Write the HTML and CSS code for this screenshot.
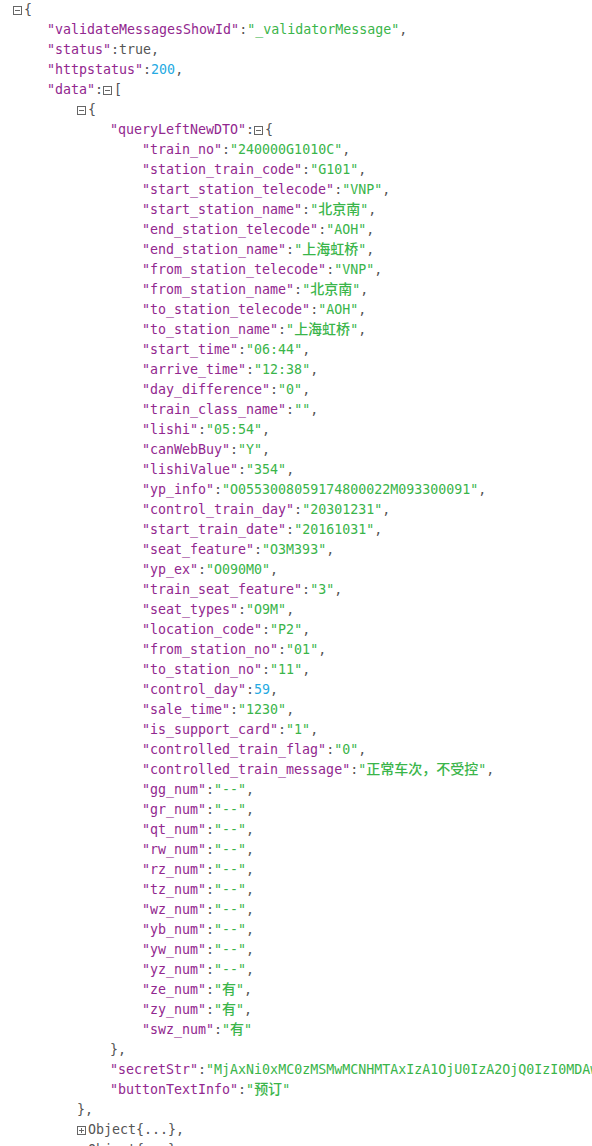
FILE: index.html
```html
<!DOCTYPE html>
<html>
<head>
<meta charset="utf-8">
<link rel="stylesheet" href="styles.css">
</head>
<body>
<div class="json">
  <div class="ln"><span class="tg"><svg width="9" height="9" viewBox="0 0 9 9"><rect x="0.5" y="0.5" width="8" height="8" fill="none" stroke="#666"/><path d="M2 4.5h5" stroke="#666"/></svg></span><span class="p">{</span></div>
  <div class="blk b1">
    <div class="ln"><span class="k">"validateMessagesShowId"</span><span class="p">:</span><span class="s">"_validatorMessage"</span><span class="p">,</span></div>
    <div class="ln"><span class="k">"status"</span><span class="p">:</span><span class="b">true</span><span class="p">,</span></div>
    <div class="ln"><span class="k">"httpstatus"</span><span class="p">:</span><span class="n">200</span><span class="p">,</span></div>
    <div class="ln"><span class="k">"data"</span><span class="p">:</span><span class="tg"><svg width="9" height="9" viewBox="0 0 9 9"><rect x="0.5" y="0.5" width="8" height="8" fill="none" stroke="#666"/><path d="M2 4.5h5" stroke="#666"/></svg></span><span class="p">[</span></div>
    <div class="blk b2">
      <div class="ln"><span class="tg"><svg width="9" height="9" viewBox="0 0 9 9"><rect x="0.5" y="0.5" width="8" height="8" fill="none" stroke="#666"/><path d="M2 4.5h5" stroke="#666"/></svg></span><span class="p">{</span></div>
      <div class="blk b3">
        <div class="ln"><span class="k">"queryLeftNewDTO"</span><span class="p">:</span><span class="tg"><svg width="9" height="9" viewBox="0 0 9 9"><rect x="0.5" y="0.5" width="8" height="8" fill="none" stroke="#666"/><path d="M2 4.5h5" stroke="#666"/></svg></span><span class="p">{</span></div>
        <div class="blk b4">
          <div class="ln"><span class="k">"train_no"</span><span class="p">:</span><span class="s">"240000G1010C"</span><span class="p">,</span></div>
          <div class="ln"><span class="k">"station_train_code"</span><span class="p">:</span><span class="s">"G101"</span><span class="p">,</span></div>
          <div class="ln"><span class="k">"start_station_telecode"</span><span class="p">:</span><span class="s">"VNP"</span><span class="p">,</span></div>
          <div class="ln"><span class="k">"start_station_name"</span><span class="p">:</span><span class="s">"<span class="cjk">北京南</span>"</span><span class="p">,</span></div>
          <div class="ln"><span class="k">"end_station_telecode"</span><span class="p">:</span><span class="s">"AOH"</span><span class="p">,</span></div>
          <div class="ln"><span class="k">"end_station_name"</span><span class="p">:</span><span class="s">"<span class="cjk">上海虹桥</span>"</span><span class="p">,</span></div>
          <div class="ln"><span class="k">"from_station_telecode"</span><span class="p">:</span><span class="s">"VNP"</span><span class="p">,</span></div>
          <div class="ln"><span class="k">"from_station_name"</span><span class="p">:</span><span class="s">"<span class="cjk">北京南</span>"</span><span class="p">,</span></div>
          <div class="ln"><span class="k">"to_station_telecode"</span><span class="p">:</span><span class="s">"AOH"</span><span class="p">,</span></div>
          <div class="ln"><span class="k">"to_station_name"</span><span class="p">:</span><span class="s">"<span class="cjk">上海虹桥</span>"</span><span class="p">,</span></div>
          <div class="ln"><span class="k">"start_time"</span><span class="p">:</span><span class="s">"06:44"</span><span class="p">,</span></div>
          <div class="ln"><span class="k">"arrive_time"</span><span class="p">:</span><span class="s">"12:38"</span><span class="p">,</span></div>
          <div class="ln"><span class="k">"day_difference"</span><span class="p">:</span><span class="s">"0"</span><span class="p">,</span></div>
          <div class="ln"><span class="k">"train_class_name"</span><span class="p">:</span><span class="s">""</span><span class="p">,</span></div>
          <div class="ln"><span class="k">"lishi"</span><span class="p">:</span><span class="s">"05:54"</span><span class="p">,</span></div>
          <div class="ln"><span class="k">"canWebBuy"</span><span class="p">:</span><span class="s">"Y"</span><span class="p">,</span></div>
          <div class="ln"><span class="k">"lishiValue"</span><span class="p">:</span><span class="s">"354"</span><span class="p">,</span></div>
          <div class="ln"><span class="k">"yp_info"</span><span class="p">:</span><span class="s">"O0553008059174800022M093300091"</span><span class="p">,</span></div>
          <div class="ln"><span class="k">"control_train_day"</span><span class="p">:</span><span class="s">"20301231"</span><span class="p">,</span></div>
          <div class="ln"><span class="k">"start_train_date"</span><span class="p">:</span><span class="s">"20161031"</span><span class="p">,</span></div>
          <div class="ln"><span class="k">"seat_feature"</span><span class="p">:</span><span class="s">"O3M393"</span><span class="p">,</span></div>
          <div class="ln"><span class="k">"yp_ex"</span><span class="p">:</span><span class="s">"O090M0"</span><span class="p">,</span></div>
          <div class="ln"><span class="k">"train_seat_feature"</span><span class="p">:</span><span class="s">"3"</span><span class="p">,</span></div>
          <div class="ln"><span class="k">"seat_types"</span><span class="p">:</span><span class="s">"O9M"</span><span class="p">,</span></div>
          <div class="ln"><span class="k">"location_code"</span><span class="p">:</span><span class="s">"P2"</span><span class="p">,</span></div>
          <div class="ln"><span class="k">"from_station_no"</span><span class="p">:</span><span class="s">"01"</span><span class="p">,</span></div>
          <div class="ln"><span class="k">"to_station_no"</span><span class="p">:</span><span class="s">"11"</span><span class="p">,</span></div>
          <div class="ln"><span class="k">"control_day"</span><span class="p">:</span><span class="n">59</span><span class="p">,</span></div>
          <div class="ln"><span class="k">"sale_time"</span><span class="p">:</span><span class="s">"1230"</span><span class="p">,</span></div>
          <div class="ln"><span class="k">"is_support_card"</span><span class="p">:</span><span class="s">"1"</span><span class="p">,</span></div>
          <div class="ln"><span class="k">"controlled_train_flag"</span><span class="p">:</span><span class="s">"0"</span><span class="p">,</span></div>
          <div class="ln"><span class="k">"controlled_train_message"</span><span class="p">:</span><span class="s">"<span class="cjk">正常车次，不受控</span>"</span><span class="p">,</span></div>
          <div class="ln"><span class="k">"gg_num"</span><span class="p">:</span><span class="s">"--"</span><span class="p">,</span></div>
          <div class="ln"><span class="k">"gr_num"</span><span class="p">:</span><span class="s">"--"</span><span class="p">,</span></div>
          <div class="ln"><span class="k">"qt_num"</span><span class="p">:</span><span class="s">"--"</span><span class="p">,</span></div>
          <div class="ln"><span class="k">"rw_num"</span><span class="p">:</span><span class="s">"--"</span><span class="p">,</span></div>
          <div class="ln"><span class="k">"rz_num"</span><span class="p">:</span><span class="s">"--"</span><span class="p">,</span></div>
          <div class="ln"><span class="k">"tz_num"</span><span class="p">:</span><span class="s">"--"</span><span class="p">,</span></div>
          <div class="ln"><span class="k">"wz_num"</span><span class="p">:</span><span class="s">"--"</span><span class="p">,</span></div>
          <div class="ln"><span class="k">"yb_num"</span><span class="p">:</span><span class="s">"--"</span><span class="p">,</span></div>
          <div class="ln"><span class="k">"yw_num"</span><span class="p">:</span><span class="s">"--"</span><span class="p">,</span></div>
          <div class="ln"><span class="k">"yz_num"</span><span class="p">:</span><span class="s">"--"</span><span class="p">,</span></div>
          <div class="ln"><span class="k">"ze_num"</span><span class="p">:</span><span class="s">"<span class="cjk">有</span>"</span><span class="p">,</span></div>
          <div class="ln"><span class="k">"zy_num"</span><span class="p">:</span><span class="s">"<span class="cjk">有</span>"</span><span class="p">,</span></div>
          <div class="ln"><span class="k">"swz_num"</span><span class="p">:</span><span class="s">"<span class="cjk">有</span>"</span></div>
        </div>
        <div class="ln"><span class="p">},</span></div>
        <div class="ln"><span class="k">"secretStr"</span><span class="p">:</span><span class="s">"MjAxNi0xMC0zMSMwMCNHMTAxIzA1OjU0IzA2OjQ0IzI0MDAwRzEwMTBD"</span><span class="p">,</span></div>
        <div class="ln"><span class="k">"buttonTextInfo"</span><span class="p">:</span><span class="s">"<span class="cjk">预订</span>"</span></div>
      </div>
      <div class="ln"><span class="p">},</span></div>
      <div class="ln"><span class="tg"><svg width="9" height="9" viewBox="0 0 9 9"><rect x="0.5" y="0.5" width="8" height="8" fill="none" stroke="#666"/><path d="M2 4.5h5M4.5 2v5" stroke="#666"/></svg></span><span class="p">Object{...},</span></div>
      <div class="ln"><span class="tg"><svg width="9" height="9" viewBox="0 0 9 9"><rect x="0.5" y="0.5" width="8" height="8" fill="none" stroke="#666"/><path d="M2 4.5h5M4.5 2v5" stroke="#666"/></svg></span><span class="p">Object{...},</span></div>
    </div>
  </div>
</div>
</body>
</html>
```
FILE: styles.css
```css
html, body {
  margin: 0;
  padding: 0;
  background: #fff;
  overflow: hidden;
}
.json {
  padding-left: 13px;
  font-family: "DejaVu Sans Mono", "Liberation Mono", "Noto Sans CJK SC", monospace;
  font-size: 13.3px;
  color: #444;
}
.ln {
  height: 20px;
  line-height: 20px;
  white-space: nowrap;
}
.b1 { padding-left: 34px; }
.b2 { padding-left: 30px; }
.b3 { padding-left: 33px; }
.b4 { padding-left: 32px; }
.tg {
  display: inline-block;
  width: 9px;
  height: 9px;
  margin-right: 2px;
  vertical-align: -1px;
}
.tg svg { display: block; }
.cjk {
  font-family: "Noto Sans CJK SC", sans-serif;
  font-size: 14px;
  font-weight: 500;
  line-height: 14px;
}
.k { color: #92278f; }
.s { color: #3ab54a; }
.n { color: #25aae2; }
.b { color: #555; }
.p { color: #555; }
```
